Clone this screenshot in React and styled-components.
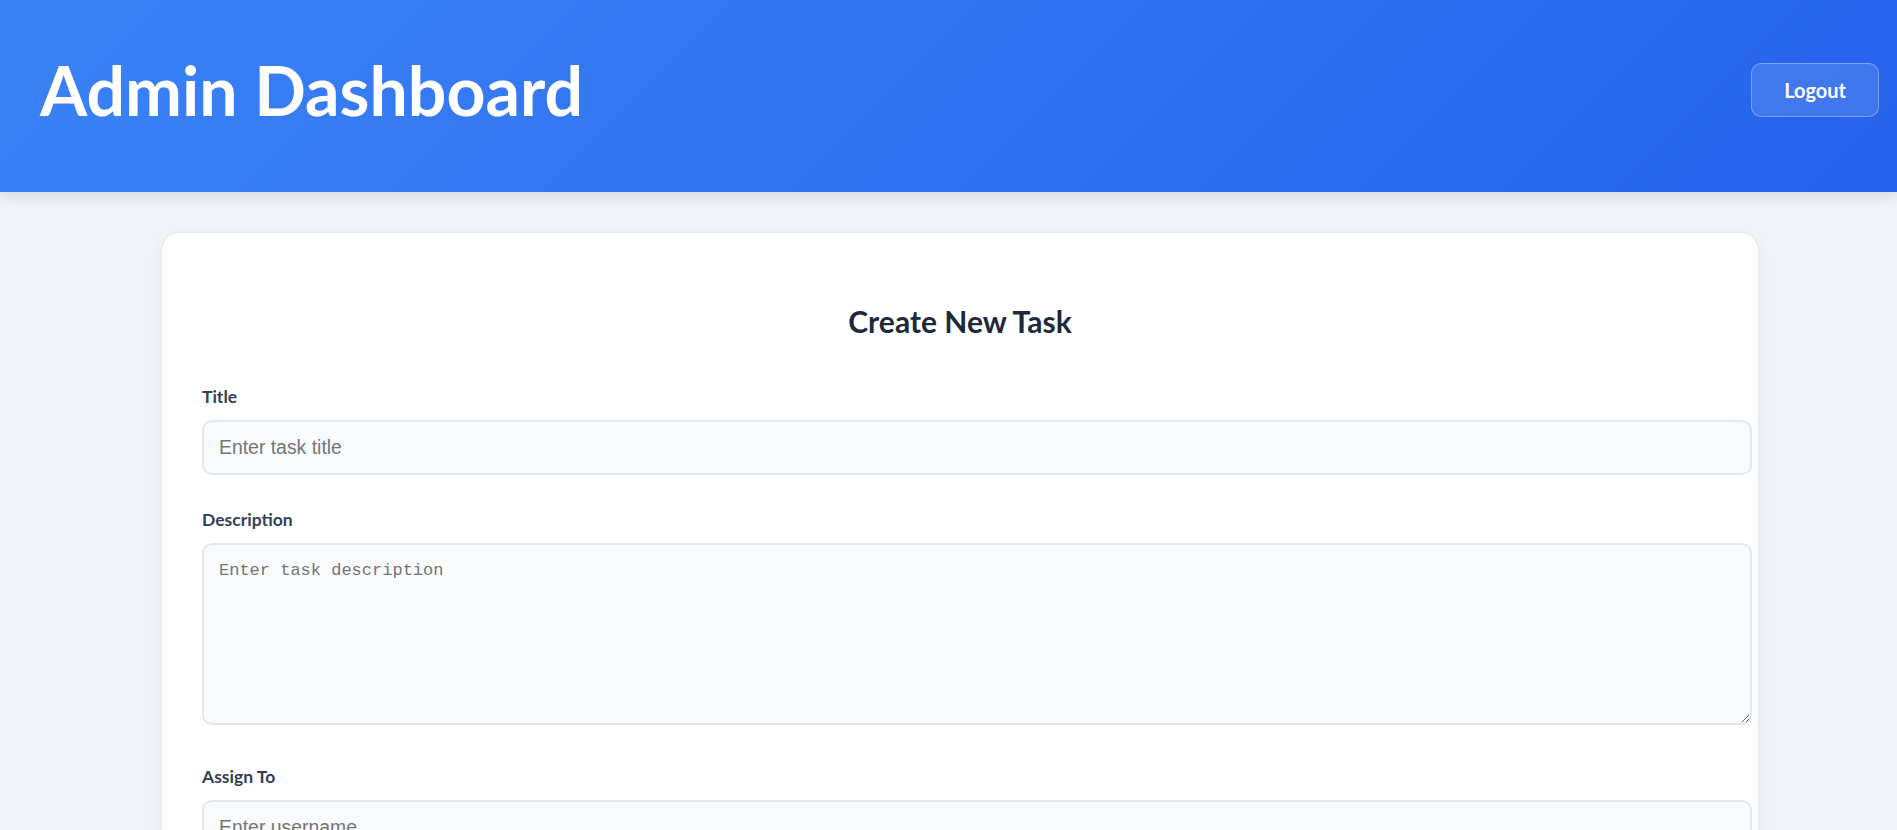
import React from 'react';
import styled, { createGlobalStyle } from 'styled-components';

const GlobalStyle = createGlobalStyle`
  * { box-sizing: border-box; }
  html, body { margin: 0; padding: 0; background: #f0f4f8; }
  body { font-family: Lato, "Noto Sans", sans-serif; }
`;

const Header = styled.header`
  display: flex;
  justify-content: space-between;
  align-items: center;
  height: 192px;
  padding: 0 18px 13px 40px;
  background: linear-gradient(135deg, #3b82f6 0%, #2563eb 100%);
  box-shadow: 0 4px 14px rgba(15, 23, 42, 0.12);
  position: relative;
  z-index: 1;
`;

const Title = styled.h1`
  margin: 0;
  color: #ffffff;
  font-size: 68px;
  font-weight: 700;
  line-height: 1.2;
`;

const LogoutButton = styled.button`
  font-family: Lato, "Noto Sans", sans-serif;
  font-size: 20px;
  font-weight: 700;
  line-height: 22px;
  color: #ffffff;
  background: rgba(255, 255, 255, 0.12);
  border: 1px solid rgba(255, 255, 255, 0.3);
  border-radius: 10px;
  padding: 15px 32px;
  cursor: pointer;
`;

const Main = styled.main`
  padding: 40px 0 40px 23px;
`;

const Card = styled.section`
  max-width: 1598px;
  margin: 0 auto;
  background: #ffffff;
  border: 1px solid #e2e8f0;
  border-radius: 19px;
  box-shadow: 0 4px 20px rgba(15, 23, 42, 0.05);
  padding: 40px 40px 48px;
`;

const FormTitle = styled.h2`
  margin: 30px 0 47px;
  text-align: center;
  color: #1e293b;
  font-size: 30px;
  font-weight: 700;
  line-height: 1.2;
`;

const Field = styled.div`
  margin-bottom: ${(p) => p.$gap || 34}px;
`;

const Label = styled.label`
  display: block;
  margin-bottom: 13px;
  color: #334155;
  font-size: 17.5px;
  font-weight: 700;
  line-height: 1.2;
`;

const Input = styled.input`
  display: block;
  box-sizing: content-box;
  width: 100%;
  height: 23px;
  padding: 14px 15px;
  border: 2px solid #e2e8f0;
  border-radius: 10px;
  background: #f8fafc;
  font-family: "Liberation Sans", Arial, sans-serif;
  font-size: 19.4px;
  line-height: 23px;
  color: #1e293b;
  outline: none;
  &::placeholder { color: #757575; }
`;

const TextArea = styled.textarea`
  display: block;
  box-sizing: content-box;
  width: 100%;
  height: 150px;
  padding: 15px 15px 13px;
  border: 2px solid #e2e8f0;
  border-radius: 10px;
  background: #f8fafc;
  font-family: "Liberation Mono", "DejaVu Sans Mono", monospace;
  font-size: 17px;
  line-height: 22px;
  color: #1e293b;
  outline: none;
  resize: vertical;
  &::placeholder { color: #757575; }
`;

const SubmitButton = styled.button`
  display: block;
  width: 100%;
  padding: 17px;
  border: none;
  border-radius: 10px;
  background: linear-gradient(135deg, #3b82f6 0%, #2563eb 100%);
  color: #ffffff;
  font-family: Lato, "Noto Sans", sans-serif;
  font-size: 19.4px;
  font-weight: 700;
  cursor: pointer;
`;

export default function App() {
  return (
    <>
      <GlobalStyle />
      <Header>
        <Title>Admin Dashboard</Title>
        <LogoutButton type="button">Logout</LogoutButton>
      </Header>
      <Main>
        <Card>
          <FormTitle>Create New Task</FormTitle>
          <form onSubmit={(e) => e.preventDefault()}>
            <Field>
              <Label htmlFor="title">Title</Label>
              <Input id="title" type="text" placeholder="Enter task title" />
            </Field>
            <Field $gap={41}>
              <Label htmlFor="description">Description</Label>
              <TextArea id="description" placeholder="Enter task description" />
            </Field>
            <Field>
              <Label htmlFor="assign">Assign To</Label>
              <Input id="assign" type="text" placeholder="Enter username" />
            </Field>
            <SubmitButton type="submit">Create Task</SubmitButton>
          </form>
        </Card>
      </Main>
    </>
  );
}
